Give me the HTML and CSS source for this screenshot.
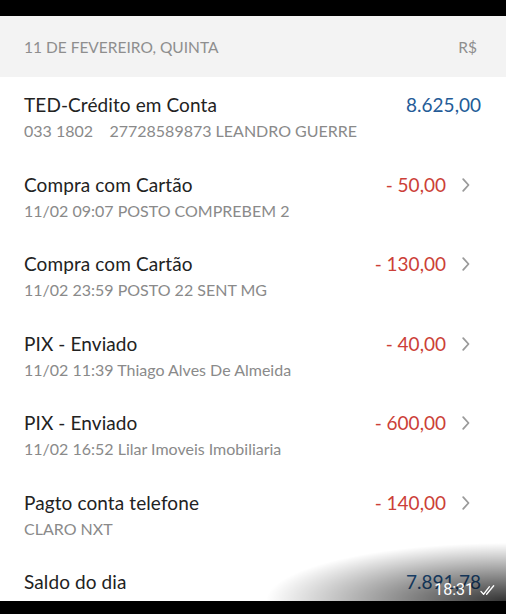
FILE: index.html
```html
<!DOCTYPE html>
<html lang="pt-BR">
<head>
<meta charset="utf-8">
<title>Extrato</title>
<link rel="stylesheet" href="styles.css">
</head>
<body>
<div class="screen">
  <div class="topbar"></div>
  <div class="day-header">
    <span>11 DE FEVEREIRO, QUINTA</span>
    <span>R$</span>
  </div>
  <ul class="list">
    <li class="row">
      <div class="info">
        <div class="title">TED-Crédito em Conta</div>
        <div class="sub">033 1802&nbsp;&nbsp;&nbsp;&nbsp;27728589873 LEANDRO GUERRE</div>
      </div>
      <div class="amount credit">8.625,00</div>
    </li>
    <li class="row link">
      <div class="info">
        <div class="title">Compra com Cartão</div>
        <div class="sub">11/02 09:07 POSTO COMPREBEM 2</div>
      </div>
      <div class="amount debit">- 50,00</div>
      <svg class="chev" viewBox="0 0 8 14" width="8" height="14"><path d="M1.2 1.2 L6.5 7 L1.2 12.8" fill="none" stroke="#9a9a9a" stroke-width="1.8" stroke-linecap="round" stroke-linejoin="round"/></svg>
    </li>
    <li class="row link">
      <div class="info">
        <div class="title">Compra com Cartão</div>
        <div class="sub">11/02 23:59 POSTO 22 SENT MG</div>
      </div>
      <div class="amount debit">- 130,00</div>
      <svg class="chev" viewBox="0 0 8 14" width="8" height="14"><path d="M1.2 1.2 L6.5 7 L1.2 12.8" fill="none" stroke="#9a9a9a" stroke-width="1.8" stroke-linecap="round" stroke-linejoin="round"/></svg>
    </li>
    <li class="row link">
      <div class="info">
        <div class="title">PIX - Enviado</div>
        <div class="sub">11/02 11:39 Thiago Alves De Almeida</div>
      </div>
      <div class="amount debit">- 40,00</div>
      <svg class="chev" viewBox="0 0 8 14" width="8" height="14"><path d="M1.2 1.2 L6.5 7 L1.2 12.8" fill="none" stroke="#9a9a9a" stroke-width="1.8" stroke-linecap="round" stroke-linejoin="round"/></svg>
    </li>
    <li class="row link">
      <div class="info">
        <div class="title">PIX - Enviado</div>
        <div class="sub">11/02 16:52 Lilar Imoveis Imobiliaria</div>
      </div>
      <div class="amount debit">- 600,00</div>
      <svg class="chev" viewBox="0 0 8 14" width="8" height="14"><path d="M1.2 1.2 L6.5 7 L1.2 12.8" fill="none" stroke="#9a9a9a" stroke-width="1.8" stroke-linecap="round" stroke-linejoin="round"/></svg>
    </li>
    <li class="row link">
      <div class="info">
        <div class="title">Pagto conta telefone</div>
        <div class="sub">CLARO NXT</div>
      </div>
      <div class="amount debit">- 140,00</div>
      <svg class="chev" viewBox="0 0 8 14" width="8" height="14"><path d="M1.2 1.2 L6.5 7 L1.2 12.8" fill="none" stroke="#9a9a9a" stroke-width="1.8" stroke-linecap="round" stroke-linejoin="round"/></svg>
    </li>
    <li class="row">
      <div class="info">
        <div class="title">Saldo do dia</div>
      </div>
      <div class="amount credit">7.891,78</div>
    </li>
  </ul>
  <div class="shade"></div>
  <div class="stamp">
    <span>18:31</span>
    <svg viewBox="0 0 18 12" width="17" height="12"><path d="M1 7.5 L3.8 10.5 L10 2.5 M7 10.5 L14.5 1.5" fill="none" stroke="#fff" stroke-width="1.4" stroke-linecap="round" stroke-linejoin="round"/></svg>
  </div>
  <div class="bottombar"></div>
</div>
</body>
</html>
```
FILE: styles.css
```css
* { box-sizing: border-box; }
html, body { margin: 0; padding: 0; background: #fff; }
body { font-family: Lato, "Open Sans", sans-serif; }
.screen {
  position: relative;
  width: 506px;
  height: 614px;
  overflow: hidden;
  background: #fff;
}
.topbar { height: 16px; background: #000; }
.day-header {
  height: 61px;
  background: #f3f3f3;
  display: flex;
  align-items: center;
  justify-content: space-between;
  padding: 0 29px 0 24px;
  color: #8e8e8e;
  font-size: 15.5px;
}
.list { list-style: none; margin: 0; padding: 0; }
.row {
  height: 79.5px;
  display: flex;
  align-items: flex-start;
  padding: 16px 25px 0 24px;
}
.info { flex: 1; min-width: 0; }
.title {
  font-size: 19px;
  line-height: 24px;
  color: #222;
  letter-spacing: 0.1px;
}
.sub {
  font-size: 16px;
  line-height: 20px;
  margin-top: 4px;
  color: #8a8a8a;
  white-space: nowrap;
}
.amount {
  font-size: 19px;
  line-height: 24px;
}
.credit { color: #245b97; }
.debit { color: #cc3f38; }
.chev { margin: 5px 11px 0 16px; flex: none; }
.shade {
  position: absolute;
  right: 0;
  bottom: 13px;
  width: 240px;
  height: 58px;
  background: radial-gradient(ellipse 100% 100% at 100% 100%, rgba(0,0,0,0.8) 0%, rgba(0,0,0,0.4) 50%, rgba(0,0,0,0) 100%);
  pointer-events: none;
}
.stamp {
  position: absolute;
  right: 9px;
  bottom: 15px;
  display: flex;
  align-items: center;
  gap: 6px;
  color: #fff;
  font-family: Roboto, sans-serif;
  font-size: 16px;
}
.bottombar {
  position: absolute;
  left: 0; right: 0; bottom: 0;
  height: 13px;
  background: #000;
}
```
